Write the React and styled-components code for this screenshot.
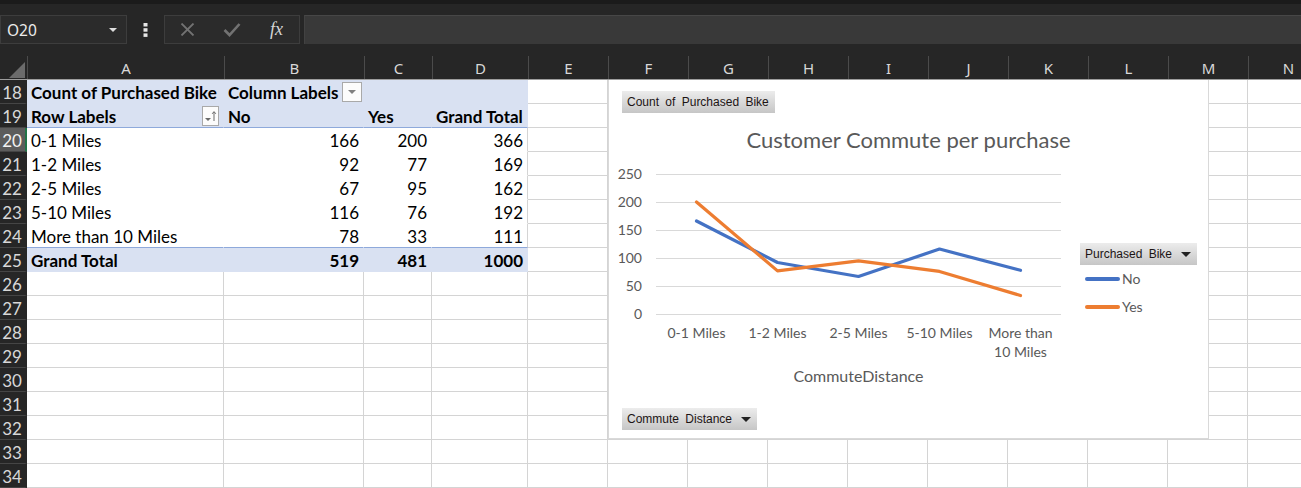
import React from 'react';
import styled, { createGlobalStyle } from 'styled-components';

const GlobalStyle = createGlobalStyle`
  html, body {
    margin: 0;
    padding: 0;
    background: #ffffff;
    overflow: hidden;
  }
  * {
    box-sizing: border-box;
  }
`;

const COLS = '27px 197px 140px 68px 96px repeat(10, 80px)';
const GRID = '#d4d4d4';
const PIVOT_BLUE = '#d9e1f2';
const PIVOT_LINE = '#8ea9db';
const BLUE = '#4472c4';
const ORANGE = '#ed7d31';

const Window = styled.div`
  width: 1301px;
  height: 488px;
  overflow: hidden;
  display: flex;
  flex-direction: column;
  background: #ffffff;
`;

const TopStrip = styled.div`
  flex: none;
  height: 4px;
  background: #1b1b1b;
`;

const FormulaBar = styled.div`
  flex: none;
  height: 52px;
  background: #262626;
  display: flex;
  align-items: flex-start;
  padding-top: 11px;
`;

const NameBox = styled.div`
  width: 127px;
  height: 29px;
  background: #2b2b2b;
  border: 1px solid #3d3d3d;
  display: flex;
  align-items: center;
  justify-content: space-between;
  padding: 0 9px 0 6px;
  color: #ececec;
  font: 15.5px "Noto Sans", sans-serif;
`;

const Caret = styled.span`
  width: 0;
  height: 0;
  border-left: ${p => p.$size || 4}px solid transparent;
  border-right: ${p => p.$size || 4}px solid transparent;
  border-top: ${p => p.$size || 4}px solid ${p => p.$color || '#dddddd'};
`;

const DotsWrap = styled.div`
  width: 37px;
  height: 29px;
  display: flex;
  align-items: center;
  justify-content: center;
`;

const FxGroup = styled.div`
  width: 136px;
  height: 29px;
  background: #2b2b2b;
  border: 1px solid #3d3d3d;
  display: flex;
  align-items: center;
  padding-left: 15px;
  gap: 28px;
`;

const FxText = styled.span`
  font: italic 18px "Liberation Serif", serif;
  color: #d6d6d6;
  margin-left: 1px;
`;

const FormulaInput = styled.div`
  flex: 1;
  margin-left: 4px;
  height: 29px;
  background: #393939;
  border-top: 1px solid #474747;
  border-left: 1px solid #424242;
`;

const Sheet = styled.div`
  position: relative;
  flex: 1;
  overflow: hidden;
`;

const HeaderRow = styled.div`
  display: grid;
  grid-template-columns: ${COLS};
  height: 24px;
  background: #262626;
  border-bottom: 1px solid #9d9d9d;
`;

const Corner = styled.div`
  display: flex;
  align-items: flex-end;
  justify-content: flex-end;
  padding: 0 2px 1px 0;

  &::after {
    content: '';
    width: 16px;
    height: 16px;
    background: #6b6b6b;
    clip-path: polygon(100% 0, 100% 100%, 0 100%);
  }
`;

const ColHead = styled.div`
  display: flex;
  align-items: center;
  justify-content: center;
  color: #d8d8d8;
  font: 15px "Noto Sans", sans-serif;
  border-left: 1px solid #4b4b4b;
  padding-top: 1px;
`;

const Body = styled.div`
  display: grid;
  grid-template-columns: ${COLS};
  grid-auto-rows: 24px;
`;

const RowHead = styled.div`
  display: flex;
  align-items: center;
  justify-content: center;
  padding: 2px 1px 0 0;
  background: ${p => (p.$active ? '#5c5c5c' : '#262626')};
  color: ${p => (p.$active ? '#f2f2f2' : '#d8d8d8')};
  font: 17px Lato, sans-serif;
  border-bottom: 1px solid #454545;
  border-right: 2px solid ${p => (p.$active ? '#217346' : '#262626')};
`;

const Cell = styled.div`
  display: flex;
  align-items: center;
  justify-content: ${p => (p.$right ? 'flex-end' : 'space-between')};
  padding: 2px 4px 0;
  font: ${p => (p.$bold ? 700 : 400)} 17px Lato, sans-serif;
  color: #000000;
  white-space: nowrap;
  background: ${p => (p.$blue ? PIVOT_BLUE : '#ffffff')};
  border-right: 1px solid ${p => (p.$pivot && !p.$edge ? 'transparent' : GRID)};
  border-bottom: 1px solid
    ${p => (p.$line ? PIVOT_LINE : p.$pivot ? 'transparent' : GRID)};
`;

const FieldButton = styled.div`
  width: ${p => p.$w}px;
  height: 20px;
  margin: -2px ${p => p.$mr || 0}px 0 0;
  background: #fcfcfc;
  border: 1px solid #a9a9a9;
  display: flex;
  align-items: center;
  justify-content: center;
`;

/* chart floats over the cells */
const ChartFrame = styled.div`
  position: absolute;
  left: 608px;
  top: 24px;
  width: 601px;
  height: 359px;
  background: #ffffff;
  border: 1px solid #d9d9d9;
  border-top: none;
  display: flex;
  flex-direction: column;
  font-family: Lato, sans-serif;
`;

const PivotButton = styled.div`
  align-self: flex-start;
  height: 22px;
  margin: ${p => p.$margin};
  padding: 0 6px 0 5px;
  display: flex;
  align-items: center;
  gap: 9px;
  background: linear-gradient(#ececec, #c6c6c6);
  color: #1c1414;
  font: 12px "Liberation Sans", sans-serif;
  word-spacing: 3px;
  white-space: nowrap;
`;

const ChartTitle = styled.div`
  height: 48px;
  padding-top: 4px;
  display: flex;
  align-items: center;
  justify-content: center;
  color: #595959;
  font-size: 22px;
`;

const PlotRow = styled.div`
  display: flex;
  height: 200px;
`;

const Legend = styled.div`
  margin: 82px 0 0 11px;
  display: flex;
  flex-direction: column;
`;

const LegendItem = styled.div`
  height: 28px;
  display: flex;
  align-items: center;
  padding: 0 0 1px 5px;
  color: #595959;
  font-size: 14px;
`;

const LegendLine = styled.span`
  width: 35px;
  height: 4px;
  border-radius: 2px;
  background: ${p => p.$color};
  margin-right: 2px;
`;

const AxisTitle = styled.div`
  width: 452px;
  padding: 0 0 4px 47px;
  height: 32px;
  display: flex;
  align-items: center;
  justify-content: center;
  color: #595959;
  font-size: 16px;
`;

const pivotRows = [
  { n: 18, kind: 'head1', cells: ['Count of Purchased Bike', 'Column Labels', '', ''] },
  { n: 19, kind: 'head2', cells: ['Row Labels', 'No', 'Yes', 'Grand Total'] },
  { n: 20, cells: ['0-1 Miles', 166, 200, 366] },
  { n: 21, cells: ['1-2 Miles', 92, 77, 169] },
  { n: 22, cells: ['2-5 Miles', 67, 95, 162] },
  { n: 23, cells: ['5-10 Miles', 116, 76, 192] },
  { n: 24, cells: ['More than 10 Miles', 78, 33, 111], last: true },
  { n: 25, kind: 'total', cells: ['Grand Total', 519, 481, 1000] },
];

const letters = ['A', 'B', 'C', 'D', 'E', 'F', 'G', 'H', 'I', 'J', 'K', 'L', 'M', 'N'];

const categories = [['0-1 Miles'], ['1-2 Miles'], ['2-5 Miles'], ['5-10 Miles'], ['More than', '10 Miles']];
const seriesNo = [166, 92, 67, 116, 78];
const seriesYes = [200, 77, 95, 76, 33];

const yOf = v => 153 - v * 0.56;
const xOf = i => 47 + 81 * i + 40.5;
const pts = arr => arr.map((v, i) => `${xOf(i)},${yOf(v)}`).join(' ');

const Dots = () => (
  <svg width="5" height="14" viewBox="0 0 5 14">
    <rect x="0.5" y="0" width="4" height="3.5" fill="#e6e6e6" />
    <rect x="0.5" y="5.2" width="4" height="3.5" fill="#e6e6e6" />
    <rect x="0.5" y="10.4" width="4" height="3.5" fill="#e6e6e6" />
  </svg>
);

const CrossIcon = () => (
  <svg width="15" height="13" viewBox="0 0 15 13">
    <path d="M1.5 0.5 L13.5 12.5 M13.5 0.5 L1.5 12.5" stroke="#727272" strokeWidth="1.8" fill="none" />
  </svg>
);

const CheckIcon = () => (
  <svg width="18" height="15" viewBox="0 0 18 15">
    <path d="M1.5 8 L6.5 13 L16.5 2" stroke="#727272" strokeWidth="2.6" fill="none" />
  </svg>
);

const SortIcon = () => (
  <svg width="13" height="14" viewBox="0 0 13 14">
    <path d="M1 9 L7 9 L4 12 Z" fill="#6a6a6a" />
    <path d="M10 12 L10 3 M8.2 4.8 L10 2.6 L11.8 4.8" stroke="#6a6a6a" strokeWidth="1" fill="none" />
  </svg>
);

const PivotCells = ({ row }) => {
  const isHead = row.kind === 'head1' || row.kind === 'head2';
  const blue = isHead || row.kind === 'total';
  const line = row.kind === 'head2' || row.last;
  return row.cells.map((c, i) => (
    <Cell
      key={i}
      $pivot
      $blue={blue}
      $bold={blue}
      $line={line}
      $edge={i === 3 && !blue}
      $right={typeof c === 'number'}
    >
      {c !== '' && <span>{c}</span>}
      {row.kind === 'head1' && i === 1 && (
        <FieldButton $w={20} $mr={-3}>
          <Caret $color="#808080" />
        </FieldButton>
      )}
      {row.kind === 'head2' && i === 0 && (
        <FieldButton $w={17}>
          <SortIcon />
        </FieldButton>
      )}
    </Cell>
  ));
};

const Chart = () => (
  <ChartFrame>
    <PivotButton $margin="11px 0 0 13px">Count of Purchased Bike</PivotButton>
    <ChartTitle>Customer Commute per purchase</ChartTitle>
    <PlotRow>
      <svg width="460" height="200" viewBox="0 0 460 200" style={{ flex: 'none' }}>
        {[0, 50, 100, 150, 200, 250].map(v => (
          <g key={v}>
            <line x1="47" x2="452" y1={yOf(v) + 0.5} y2={yOf(v) + 0.5} stroke="#d9d9d9" strokeWidth="1" />
            <text
              x="33"
              y={yOf(v) + 5}
              textAnchor="end"
              fontFamily="Lato, sans-serif"
              fontSize="14"
              fill="#595959"
            >
              {v}
            </text>
          </g>
        ))}
        {categories.map((lines, i) =>
          lines.map((t, j) => (
            <text
              key={`${i}-${j}`}
              x={xOf(i)}
              y={177 + j * 19}
              textAnchor="middle"
              fontFamily="Lato, sans-serif"
              fontSize="14"
              fill="#595959"
            >
              {t}
            </text>
          ))
        )}
        <polyline points={pts(seriesNo)} fill="none" stroke={BLUE} strokeWidth="3.2" strokeLinejoin="round" strokeLinecap="round" />
        <polyline points={pts(seriesYes)} fill="none" stroke={ORANGE} strokeWidth="3.2" strokeLinejoin="round" strokeLinecap="round" />
      </svg>
      <Legend>
        <PivotButton $margin="0">
          Purchased Bike
          <Caret $size={5} $color="#222222" />
        </PivotButton>
        <LegendItem>
          <LegendLine $color={BLUE} />
          No
        </LegendItem>
        <LegendItem>
          <LegendLine $color={ORANGE} />
          Yes
        </LegendItem>
      </Legend>
    </PlotRow>
    <AxisTitle>CommuteDistance</AxisTitle>
    <PivotButton $margin="15px 0 0 13px">
      Commute Distance
      <Caret $size={5} $color="#222222" />
    </PivotButton>
  </ChartFrame>
);

const App = () => {
  const emptyRows = [26, 27, 28, 29, 30, 31, 32, 33, 34];
  return (
    <Window>
      <GlobalStyle />
      <TopStrip />
      <FormulaBar>
        <NameBox>
          <span>O20</span>
          <Caret />
        </NameBox>
        <DotsWrap>
          <Dots />
        </DotsWrap>
        <FxGroup>
          <CrossIcon />
          <CheckIcon />
          <FxText>fx</FxText>
        </FxGroup>
        <FormulaInput />
      </FormulaBar>
      <Sheet>
        <HeaderRow>
          <Corner />
          {letters.map(l => (
            <ColHead key={l}>{l}</ColHead>
          ))}
        </HeaderRow>
        <Body>
          {pivotRows.map(row => (
            <React.Fragment key={row.n}>
              <RowHead $active={row.n === 20}>{row.n}</RowHead>
              <PivotCells row={row} />
              {letters.slice(4).map(l => (
                <Cell key={l} />
              ))}
            </React.Fragment>
          ))}
          {emptyRows.map(n => (
            <React.Fragment key={n}>
              <RowHead>{n}</RowHead>
              {letters.map(l => (
                <Cell key={l} />
              ))}
            </React.Fragment>
          ))}
        </Body>
        <Chart />
      </Sheet>
    </Window>
  );
};

export default App;
